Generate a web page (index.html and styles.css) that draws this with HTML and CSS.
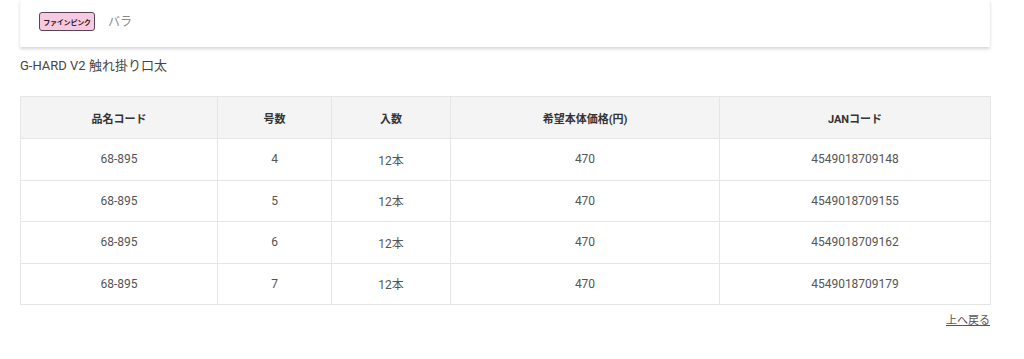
FILE: index.html
```html
<!DOCTYPE html>
<html lang="ja">
<head>
<meta charset="utf-8">
<link rel="stylesheet" href="styles.css">
</head>
<body>
<div class="page">
  <div class="panel">
    <span class="badge">ファインピンク</span>
    <span class="variant">バラ</span>
  </div>
  <h2 class="title">G-HARD V2 触れ掛り口太</h2>
  <table class="spec">
    <colgroup>
      <col class="c1"><col class="c2"><col class="c3"><col class="c4"><col class="c5">
    </colgroup>
    <thead>
      <tr>
        <th>品名コード</th>
        <th>号数</th>
        <th>入数</th>
        <th>希望本体価格(円)</th>
        <th>JANコード</th>
      </tr>
    </thead>
    <tbody>
      <tr><td>68-895</td><td>4</td><td>12本</td><td>470</td><td>4549018709148</td></tr>
      <tr><td>68-895</td><td>5</td><td>12本</td><td>470</td><td>4549018709155</td></tr>
      <tr><td>68-895</td><td>6</td><td>12本</td><td>470</td><td>4549018709162</td></tr>
      <tr><td>68-895</td><td>7</td><td>12本</td><td>470</td><td>4549018709179</td></tr>
    </tbody>
  </table>
  <div class="back"><a href="#">上へ戻る</a></div>
</div>
</body>
</html>
```

FILE: styles.css
```css
html, body {
  margin: 0;
  padding: 0;
  background: #fff;
}
body {
  font-family: Roboto, "Noto Sans CJK JP", sans-serif;
  color: #444;
}
.page {
  width: 970px;
  margin-left: 20px;
}
.panel {
  height: 47px;
  box-sizing: border-box;
  padding: 12px 0 0 18px;
  display: flex;
  gap: 13px;
  background: #fff;
  box-shadow: 0 2px 3px rgba(0, 0, 0, 0.16);
  border-left: 1px solid #fafafa;
  border-right: 1px solid #fafafa;
}
.panel > * { align-self: flex-start; }
.badge {
  display: flex;
  align-items: center;
  justify-content: center;
  height: 19px;
  width: 56px;
  box-sizing: border-box;
  background: #f7c9e3;
  border: 1px solid #5b4550;
  border-radius: 3px;
  font-size: 7px;
  font-weight: 700;
  color: #222;
  white-space: nowrap;
  letter-spacing: -0.2px;
}
.variant {
  font-size: 12px;
  line-height: 21px;
  color: #8a8a8a;
}
.title {
  margin: 10px 0 0 0;
  font-size: 13px;
  font-weight: 400;
  line-height: 18px;
  color: #444;
}
.spec {
  margin-top: 21px;
  width: 970px;
  border-collapse: collapse;
  table-layout: fixed;
}
.spec th, .spec td {
  border: 1px solid #e6e6e6;
  text-align: center;
  padding: 0;
}
.spec th {
  height: 41px;
  background: #f4f4f4;
  font-size: 11px;
  font-weight: 700;
  color: #333;
}
.spec td {
  height: 40.5px;
  font-size: 12px;
  color: #555;
}
.c1 { width: 197px; }
.c2 { width: 114px; }
.c3 { width: 119px; }
.c4 { width: 269px; }
.c5 { width: 271px; }
.back {
  text-align: right;
  margin-top: 8px;
  font-size: 11px;
  line-height: 16px;
}
.back a {
  color: #555;
  text-decoration: underline;
}
```
